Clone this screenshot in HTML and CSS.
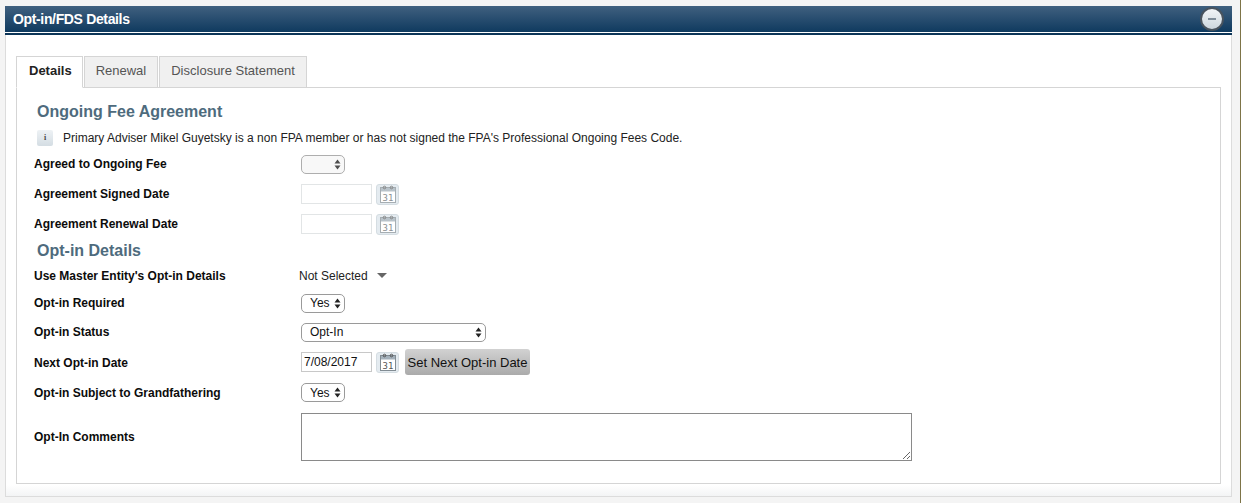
FILE: index.html
```html
<!DOCTYPE html>
<html lang="en">
<head>
    <meta charset="UTF-8">
    <title>Opt-in/FDS Details</title>
    <link rel="stylesheet" href="styles.css">
</head>
<body>
    <div class="panel">
        <div class="panel-head">
            <span class="panel-title">Opt-in/FDS Details</span>
            <span class="collapse"><span class="collapse-bar"></span></span>
        </div>
        <div class="panel-body">
            <ul class="tabs">
                <li class="tab active">Details</li>
                <li class="tab">Renewal</li>
                <li class="tab">Disclosure Statement</li>
            </ul>
            <div class="tab-content">
                <h2 class="section first">Ongoing Fee Agreement</h2>
                <div class="notice">
                    <span class="info-icon">i</span>
                    <span>Primary Adviser Mikel Guyetsky is a non FPA member or has not signed the FPA's Professional Ongoing Fees Code.</span>
                </div>
                <div class="field h30">
                    <label>Agreed to Ongoing Fee</label>
                    <select class="select small dim"><option></option></select>
                </div>
                <div class="field h30">
                    <label>Agreement Signed Date</label>
                    <input class="date dim" type="text" value="">
                    <span class="cal dim">
                        <svg width="16" height="18" viewBox="0 0 16 18"><rect x="0.5" y="2.5" width="15" height="15" fill="#fff" stroke="#a6aeb3"/><rect x="1" y="3" width="14" height="3.5" fill="#b9c3ca"/><circle cx="4.5" cy="2.5" r="1.3" fill="none" stroke="#888"/><circle cx="11.5" cy="2.5" r="1.3" fill="none" stroke="#888"/><text x="8" y="15.5" text-anchor="middle" class="cal-num">31</text></svg>
                    </span>
                </div>
                <div class="field h30">
                    <label>Agreement Renewal Date</label>
                    <input class="date dim" type="text" value="">
                    <span class="cal dim">
                        <svg width="16" height="18" viewBox="0 0 16 18"><rect x="0.5" y="2.5" width="15" height="15" fill="#fff" stroke="#a6aeb3"/><rect x="1" y="3" width="14" height="3.5" fill="#b9c3ca"/><circle cx="4.5" cy="2.5" r="1.3" fill="none" stroke="#888"/><circle cx="11.5" cy="2.5" r="1.3" fill="none" stroke="#888"/><text x="8" y="15.5" text-anchor="middle" class="cal-num">31</text></svg>
                    </span>
                </div>
                <h2 class="section second">Opt-in Details</h2>
                <div class="field h27">
                    <label>Use Master Entity's Opt-in Details</label>
                    <span class="dropdown">Not Selected<span class="caret"></span></span>
                </div>
                <div class="field h28">
                    <label>Opt-in Required</label>
                    <select class="select small"><option>Yes</option></select>
                </div>
                <div class="field h30">
                    <label>Opt-in Status</label>
                    <select class="select wide"><option>Opt-In</option></select>
                </div>
                <div class="field h30">
                    <label class="nudge">Next Opt-in Date</label>
                    <input class="date" type="text" value="7/08/2017">
                    <span class="cal">
                        <svg width="16" height="18" viewBox="0 0 16 18"><rect x="0.5" y="2.5" width="15" height="15" fill="#fff" stroke="#828c93"/><rect x="1" y="3" width="14" height="3.5" fill="#a3b0ba"/><circle cx="4.5" cy="2.5" r="1.3" fill="none" stroke="#555"/><circle cx="11.5" cy="2.5" r="1.3" fill="none" stroke="#555"/><text x="8" y="15.5" text-anchor="middle" class="cal-num">31</text></svg>
                    </span>
                    <button class="btn" type="button">Set Next Opt-in Date</button>
                </div>
                <div class="field h31">
                    <label>Opt-in Subject to Grandfathering</label>
                    <select class="select small"><option>Yes</option></select>
                </div>
                <div class="field comments">
                    <label>Opt-In Comments</label>
                    <textarea class="comment-box"></textarea>
                </div>
            </div>
        </div>
    </div>
</body>
</html>
```

FILE: styles.css
```css
html, body {
    height: 100%;
}
body {
    margin: 0;
    padding: 6px 8px 0 5px;
    box-sizing: border-box;
    background: #f4f4f4;
    border-right: 1px solid #7d7448;
    font-family: "Liberation Sans", Arial, sans-serif;
    font-size: 12px;
    color: #111;
    overflow: hidden;
}
.panel {
    width: 1227px;
}
.panel-head {
    height: 26px;
    display: flex;
    align-items: center;
    justify-content: space-between;
    padding: 0 8px 0 8px;
    background: linear-gradient(#40607f, #0f3a5f);
    border-bottom: 3px solid #0c3558;
    position: relative;
}
.panel-head::after {
    content: "";
    position: absolute;
    left: 0;
    right: 0;
    bottom: -1px;
    height: 1px;
    background: #fff;
}
.panel-title {
    color: #fff;
    font-size: 14px;
    font-weight: bold;
    letter-spacing: -0.35px;
}
.collapse {
    width: 20px;
    height: 20px;
    border: 2px solid #48535e;
    border-radius: 50%;
    background: linear-gradient(#f2f5f7, #ccd6dd);
    display: flex;
    align-items: center;
    justify-content: center;
}
.collapse-bar {
    width: 8px;
    height: 2px;
    background: #7f8d99;
}
.panel-body {
    background: linear-gradient(#fff 450px, #f3f4f5);
    height: 462px;
    padding: 21px 10px 0 10px;
    box-sizing: border-box;
    border: 1px solid #dcdcdc;
    border-top: 0;
}
.tabs {
    list-style: none;
    margin: 0;
    padding: 0;
    display: flex;
    height: 32px;
    position: relative;
    z-index: 1;
}
.tab {
    box-sizing: border-box;
    height: 32px;
    padding: 6px 11px 0;
    margin-right: 1px;
    font-size: 13px;
    color: #555;
    background: #f0f0f0;
    border: 1px solid #d5d5d5;
}
.tab.active {
    padding: 6px 10px 0 12px;
    background: #fff;
    color: #222;
    font-weight: bold;
    border-bottom-color: #fff;
}
.tab-content {
    box-sizing: border-box;
    height: 397px;
    margin-top: -1px;
    padding: 0 17px;
    background: #fff;
    border: 1px solid #d5d5d5;
}
.section {
    margin: 0 0 0 3px;
    font-size: 16px;
    line-height: 22px;
    font-weight: bold;
    color: #4e6b7d;
}
.section.first {
    padding-top: 13px;
}
.section.second {
    padding-top: 1px;
}
.notice {
    display: flex;
    align-items: center;
    height: 22px;
    margin: 4px 0 0 3px;
    color: #222;
}
.info-icon {
    box-sizing: border-box;
    width: 16px;
    height: 16px;
    margin-right: 10px;
    background: linear-gradient(#eef2f5, #d4dde3);
    border-radius: 2px;
    font-size: 8px;
    font-weight: bold;
    font-family: "Liberation Serif", serif;
    color: #444;
    text-align: center;
    line-height: 16px;
}
.field {
    display: flex;
    align-items: center;
}
.field label {
    width: 267px;
    flex-shrink: 0;
    font-weight: bold;
    color: #0c0c0c;
}
.field label.nudge {
    padding-top: 2px;
}
.h27 {
    height: 27px;
}
.h28 {
    height: 28px;
}
.h30 {
    height: 30px;
}
.h31 {
    height: 31px;
}
.select {
    appearance: none;
    box-sizing: border-box;
    height: 19px;
    padding: 0 0 0 8px;
    font: 12px "Liberation Sans", Arial, sans-serif;
    color: #111;
    border: 1px solid #9a9a9a;
    border-radius: 5px;
    background: #fff url("data:image/svg+xml,%3Csvg xmlns='http://www.w3.org/2000/svg' width='7' height='11'%3E%3Cpath d='M3.5 0.5L6.5 4.5H0.5zM3.5 10.5L0.5 6.5H6.5z' fill='%23222'/%3E%3C/svg%3E") no-repeat right 3px center;
}
.select.small {
    width: 44px;
}
.select.wide {
    width: 185px;
}
.select.dim {
    opacity: 0.8;
    background-color: #f7f7f7;
}
.date {
    box-sizing: border-box;
    width: 71px;
    height: 20px;
    padding: 0 2px;
    font: 12px "Liberation Sans", Arial, sans-serif;
    color: #111;
    background: #fff;
    border: 1px solid #c8c8c8;
    outline: none;
}
.date.dim {
    border-color: #e2e5e6;
}
.cal {
    box-sizing: border-box;
    width: 23px;
    height: 21px;
    margin-left: 4px;
    display: flex;
    align-items: center;
    justify-content: center;
    background: #e4ebf0;
    border: 1px solid #d5dde2;
    border-radius: 3px;
}
.cal-num {
    font: 9px "DejaVu Sans Mono", monospace;
    fill: #555;
}
.cal.dim .cal-num {
    fill: #8a8f93;
}
.btn {
    box-sizing: border-box;
    width: 125px;
    height: 26px;
    margin-left: 6px;
    padding: 0;
    font: 13px "Liberation Sans", Arial, sans-serif;
    color: #111;
    background: linear-gradient(#d2d2d2, #ababab);
    border: 0;
    border-radius: 3px;
}
.dropdown {
    margin-left: -2px;
    color: #222;
    display: flex;
    align-items: center;
}
.caret {
    width: 0;
    height: 0;
    margin-left: 9px;
    border-left: 5px solid transparent;
    border-right: 5px solid transparent;
    border-top: 5px solid #666;
}
.comments {
    margin-top: 5px;
}
.comment-box {
    box-sizing: border-box;
    width: 611px;
    height: 48px;
    margin: 0;
    border: 1px solid #8a8a8a;
    background: #fff;
}
```
